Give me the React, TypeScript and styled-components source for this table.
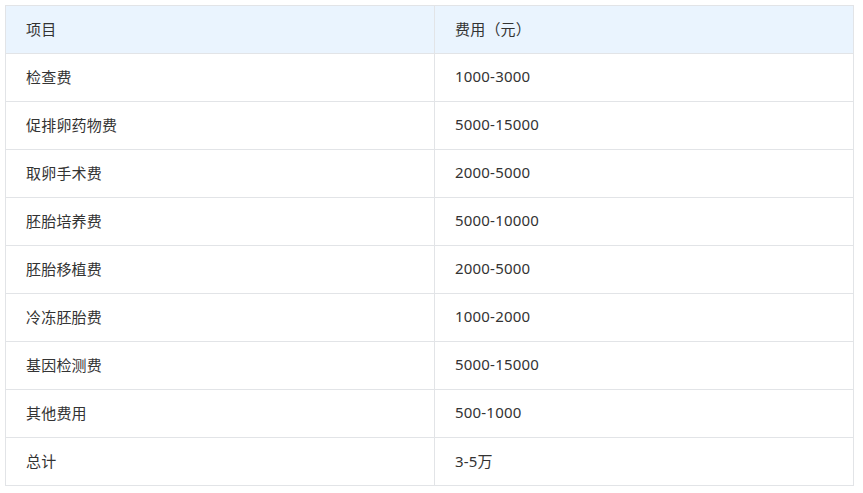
import React from 'react';
import styled, {createGlobalStyle} from "styled-components";

const GlobalStyle = createGlobalStyle`
  body {
    margin: 0;
    background: #ffffff;
    font-family: "Noto Sans", "Noto Sans CJK SC", sans-serif;
  }
`;

const Page = styled.div`
  padding: 5px;
`;

const Table = styled.table`
  width: 849px;
  border-collapse: collapse;
  table-layout: fixed;
  font-size: 15px;
  color: #333333;
  letter-spacing: 0.2px;
`;

const HeadCell = styled.th`
  height: 44px;
  padding: 0 20px 3px;
  text-align: left;
  font-weight: normal;
  background-color: #eaf4fe;
  border: 1px solid #e2e4e7;
`;

const Cell = styled.td`
  height: 44px;
  padding: 0 20px 3px;
  border: 1px solid #e2e4e7;
`;

const rows = [
    ['检查费', '1000-3000'],
    ['促排卵药物费', '5000-15000'],
    ['取卵手术费', '2000-5000'],
    ['胚胎培养费', '5000-10000'],
    ['胚胎移植费', '2000-5000'],
    ['冷冻胚胎费', '1000-2000'],
    ['基因检测费', '5000-15000'],
    ['其他费用', '500-1000'],
    ['总计', '3-5万'],
];

function App() {
    return (
        <Page>
            <GlobalStyle/>
            <Table>
                <colgroup>
                    <col style={{width: 429}}/>
                    <col/>
                </colgroup>
                <thead>
                <tr>
                    <HeadCell>项目</HeadCell>
                    <HeadCell>费用（元）</HeadCell>
                </tr>
                </thead>
                <tbody>
                {rows.map(([item, cost]) => (
                    <tr key={item}>
                        <Cell>{item}</Cell>
                        <Cell>{cost}</Cell>
                    </tr>
                ))}
                </tbody>
            </Table>
        </Page>
    );
}

export default App;
